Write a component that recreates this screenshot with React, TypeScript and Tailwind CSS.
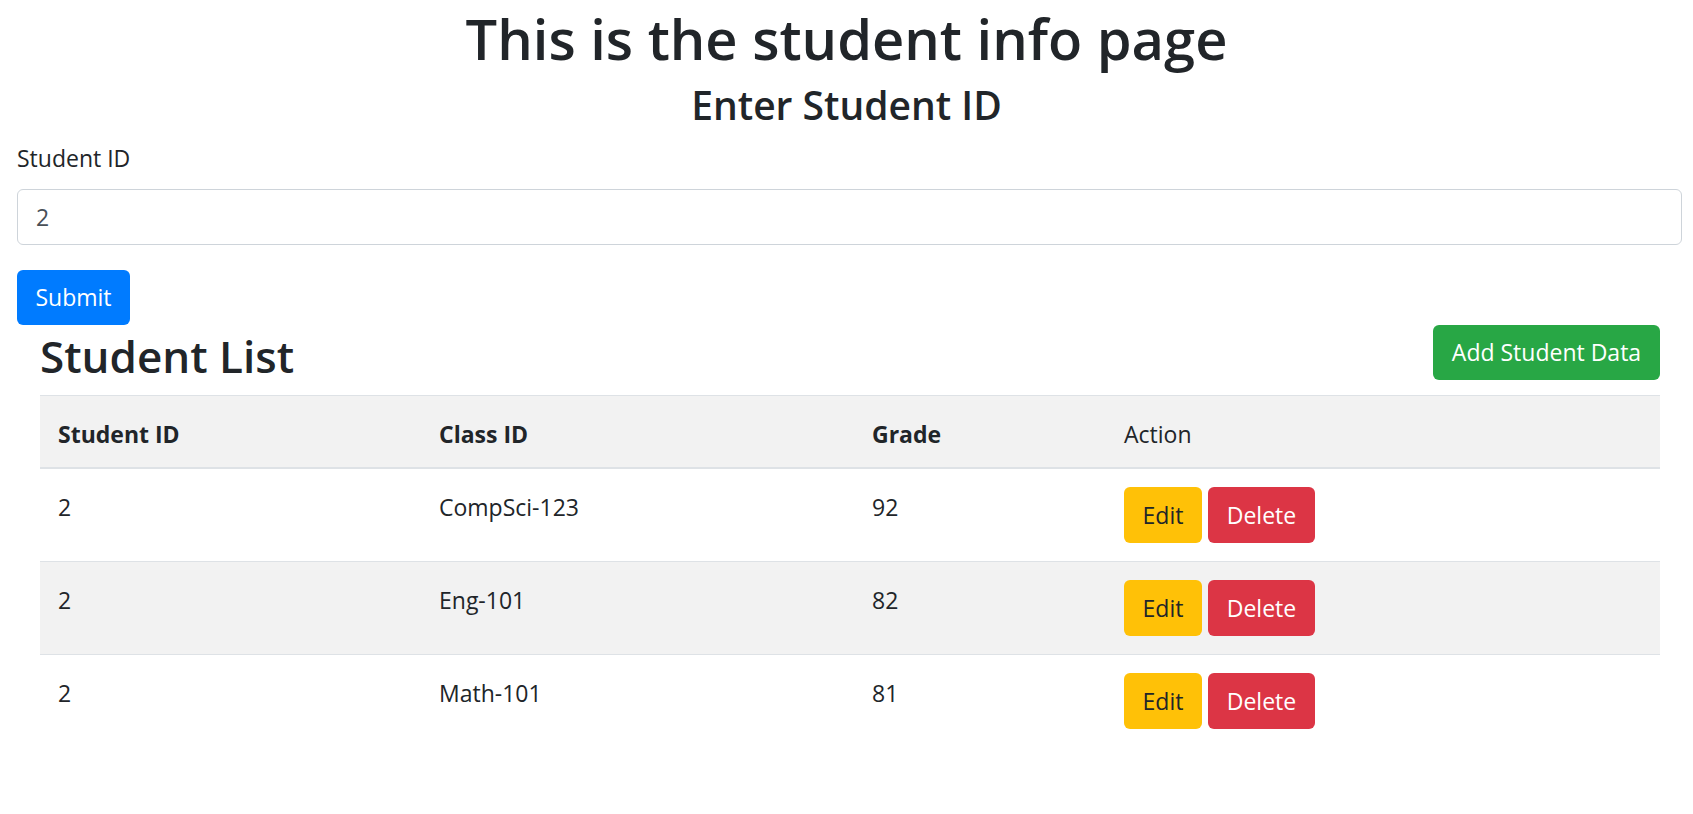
const rows = [
  { id: "2", cls: "CompSci-123", grade: "92", striped: false },
  { id: "2", cls: "Eng-101", grade: "82", striped: true },
  { id: "2", cls: "Math-101", grade: "81", striped: false },
];

export default function App() {
  return (
    <div className="min-h-screen bg-white text-[#212529] font-['Open_Sans','Noto_Sans',sans-serif]">
      {/* page titles */}
      <h1 className="text-center text-[56px] leading-[76px] font-semibold">This is the student info page</h1>
      <h2 className="text-center text-[39px] leading-[48px] font-semibold mt-[5px]">Enter Student ID</h2>

      {/* lookup form */}
      <form className="pl-[17px] pr-[11px] mt-[12px]" onSubmit={(e) => e.preventDefault()}>
        <label className="block text-[23px] leading-[35px] mb-[13px]">Student ID</label>
        <input
          className="block w-full h-[56px] px-[18px] border border-[#ced4da] rounded-[6px] text-[23px] text-[#495057] outline-none"
          defaultValue="2"
        />
        <button
          type="submit"
          className="mt-[25px] h-[55px] w-[113px] bg-[#007bff] text-white text-[23px] rounded-[6px]"
        >
          Submit
        </button>
      </form>

      {/* student list */}
      <div className="pl-[40px] pr-[33px]">
        <div className="flex items-start justify-between h-[56px]">
          <h2 className="text-[44px] leading-[56px] font-semibold mt-[3px]">Student List</h2>
          <button className="h-[55px] w-[227px] bg-[#28a745] text-white text-[23px] rounded-[6px]">
            Add Student Data
          </button>
        </div>

        <table className="w-full mt-[14px] border-collapse text-[23px] leading-[35px]">
          <colgroup>
            <col className="w-[381px]" />
            <col className="w-[433px]" />
            <col className="w-[252px]" />
            <col />
          </colgroup>
          <thead>
            <tr className="bg-[#f2f2f2] border-t border-[#dee2e6] border-b-2">
              <th className="text-left font-bold px-[18px] pt-[21px] pb-[15px]">Student ID</th>
              <th className="text-left font-bold px-[18px] pt-[21px] pb-[15px]">Class ID</th>
              <th className="text-left font-bold px-[18px] pt-[21px] pb-[15px]">Grade</th>
              <th className="text-left font-normal px-[18px] pt-[21px] pb-[15px]">Action</th>
            </tr>
          </thead>
          <tbody>
            {rows.map((r, i) => (
              <tr key={i} className={`${r.striped ? "bg-[#f2f2f2]" : "bg-white"} ${i > 0 ? "border-t border-[#dee2e6]" : ""}`}>
                <td className="align-top px-[18px] pt-[21px]">{r.id}</td>
                <td className="align-top px-[18px] pt-[21px]">{r.cls}</td>
                <td className="align-top px-[18px] pt-[21px]">{r.grade}</td>
                <td className="align-top px-[18px] py-[18px]">
                  <div className="flex gap-[6px]">
                    <button className="h-[56px] w-[78px] bg-[#ffc107] text-[#212529] rounded-[6px]">Edit</button>
                    <button className="h-[56px] w-[107px] bg-[#dc3545] text-white rounded-[6px]">Delete</button>
                  </div>
                </td>
              </tr>
            ))}
          </tbody>
        </table>
      </div>
    </div>
  );
}
